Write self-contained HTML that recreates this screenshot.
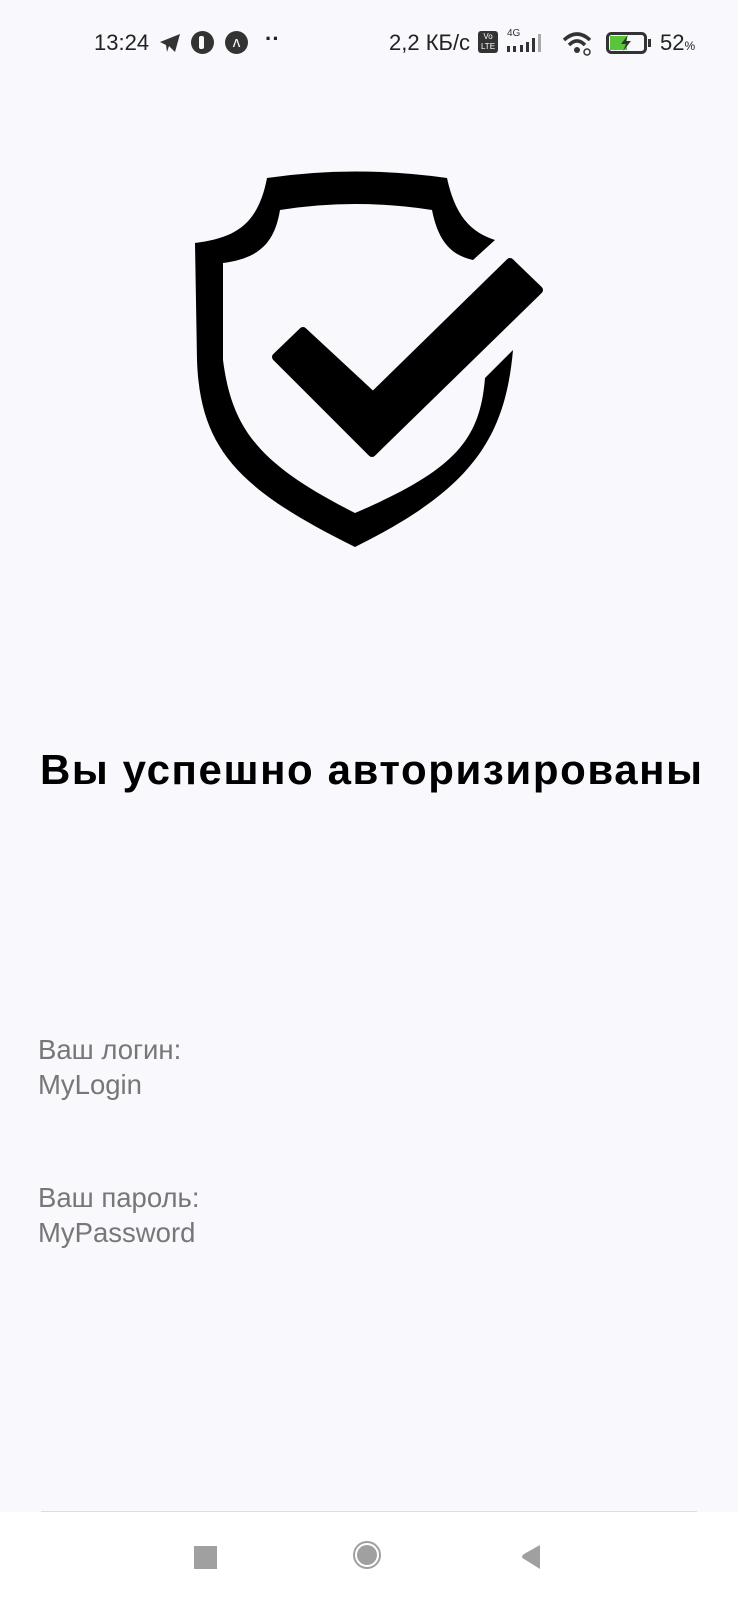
<!DOCTYPE html>
<html><head><meta charset="utf-8"><style>
body{margin:0;width:738px;height:1600px;background:#f8f8fd;position:relative;overflow:hidden;font-family:"Liberation Sans","DejaVu Sans",sans-serif}
.sb{position:absolute;top:30px;font-size:22px;color:#222;}
.t{position:absolute;left:40px;top:746px;font-size:42px;font-weight:bold;color:#000;white-space:nowrap;letter-spacing:1.6px}
.l{position:absolute;left:38px;font-size:27.5px;color:#777;line-height:35px}
.nav{position:absolute;left:0;top:1512px;width:738px;height:88px;background:#fff}
.line{position:absolute;left:41px;top:1511px;width:656px;height:1px;background:#dcdce2}
</style></head><body>
<div class="sb" style="left:94px">13:24</div>
<svg style="position:absolute;left:158px;top:32px" width="24" height="22"><path d="M2,10 L22,2 L17,20 L11,14 L9,20 L8,13 Z" fill="#333"/></svg>
<div style="position:absolute;left:191px;top:31px;width:23px;height:23px;border-radius:50%;background:#333"></div>
<div style="position:absolute;left:199px;top:36px;width:5px;height:13px;background:#f8f8fd;border-radius:2px"></div>
<div style="position:absolute;left:225px;top:31px;width:23px;height:23px;border-radius:50%;background:#333;color:#fff;font-size:15px;text-align:center;line-height:23px">ʌ</div>
<div class="sb" style="left:265px;top:26px;font-weight:bold">··</div>
<div class="sb" style="left:389px">2,2 КБ/с</div>
<div style="position:absolute;left:478px;top:31px;width:20px;height:22px;background:#333;border-radius:3px;color:#fff;font-size:8px;text-align:center;line-height:10px;padding-top:1px;box-sizing:border-box">Vo<br>LTE</div>
<div style="position:absolute;left:507px;top:28px;font-size:10px;color:#333">4G</div>
<svg style="position:absolute;left:507px;top:34px" width="46" height="20"><rect x="0" y="12" width="3" height="6" fill="#333"/><rect x="6" y="12" width="3" height="6" fill="#333"/><rect x="13" y="11" width="3" height="7" fill="#333"/><rect x="19" y="8" width="3" height="10" fill="#333"/><rect x="25" y="4" width="3" height="14" fill="#333"/><rect x="31" y="0" width="3" height="18" fill="#aaa"/></svg>
<svg style="position:absolute;left:562px;top:30px" width="32" height="26"><path d="M2,10 Q15,-2 28,10" stroke="#333" stroke-width="3.5" fill="none"/><path d="M7,15 Q15,7 23,15" stroke="#333" stroke-width="3.5" fill="none"/><circle cx="15" cy="20" r="3" fill="#333"/><circle cx="25" cy="22" r="3" stroke="#333" fill="none" stroke-width="1.5"/></svg>
<svg style="position:absolute;left:606px;top:32px" width="48" height="22"><rect x="1.5" y="1.5" width="38" height="19" rx="4" fill="none" stroke="#333" stroke-width="3"/><rect x="4" y="4" width="17" height="14" fill="#5ac43a"/><rect x="42" y="7" width="3" height="8" fill="#333"/><path d="M22,3 L15,12 L20,12 L17,19 L25,9 L20,9 Z" fill="#333"/></svg>
<div class="sb" style="left:660px">52<span style="font-size:12px">%</span></div>

<svg style="position:absolute;left:0;top:0" width="738" height="600">
<path fill="#000" d="M495,240 C470,232 455,215 447,178 Q355,165 267,178 C258,225 235,238 195,243 L197,360 C200,450 240,490 355,547 C470,490 505,440 513,350 L485,378 C480,440 455,470 355,513 C260,465 232,430 223,360 L223,263 C262,258 275,240 280,210 Q355,198 432,210 C438,240 450,255 473,260 Z"/>
<path fill="#000" stroke="#000" stroke-width="8" stroke-linejoin="round" d="M303,331 L373,396 L510,262 L539,290 L372,453 L276,357 Z"/>
</svg>

<div class="t">Вы успешно авторизированы</div>
<div class="l" style="top:1032px">Ваш логин:<br>MyLogin</div>
<div class="l" style="top:1180px">Ваш пароль:<br>MyPassword</div>

<div class="nav"></div>
<div class="line"></div>
<div style="position:absolute;left:194px;top:1546px;width:23px;height:23px;background:#a0a0a0"></div>
<div style="position:absolute;left:353px;top:1541px;width:28px;height:28px;border-radius:50%;border:2px solid #a0a0a0;box-sizing:border-box"></div>
<div style="position:absolute;left:357px;top:1545px;width:20px;height:20px;border-radius:50%;background:#a0a0a0"></div>
<svg style="position:absolute;left:518px;top:1543px" width="24" height="28"><path d="M22,2 L22,26 L6,16 Q2,14 6,11 Z" fill="#a0a0a0"/></svg>
</body></html>
